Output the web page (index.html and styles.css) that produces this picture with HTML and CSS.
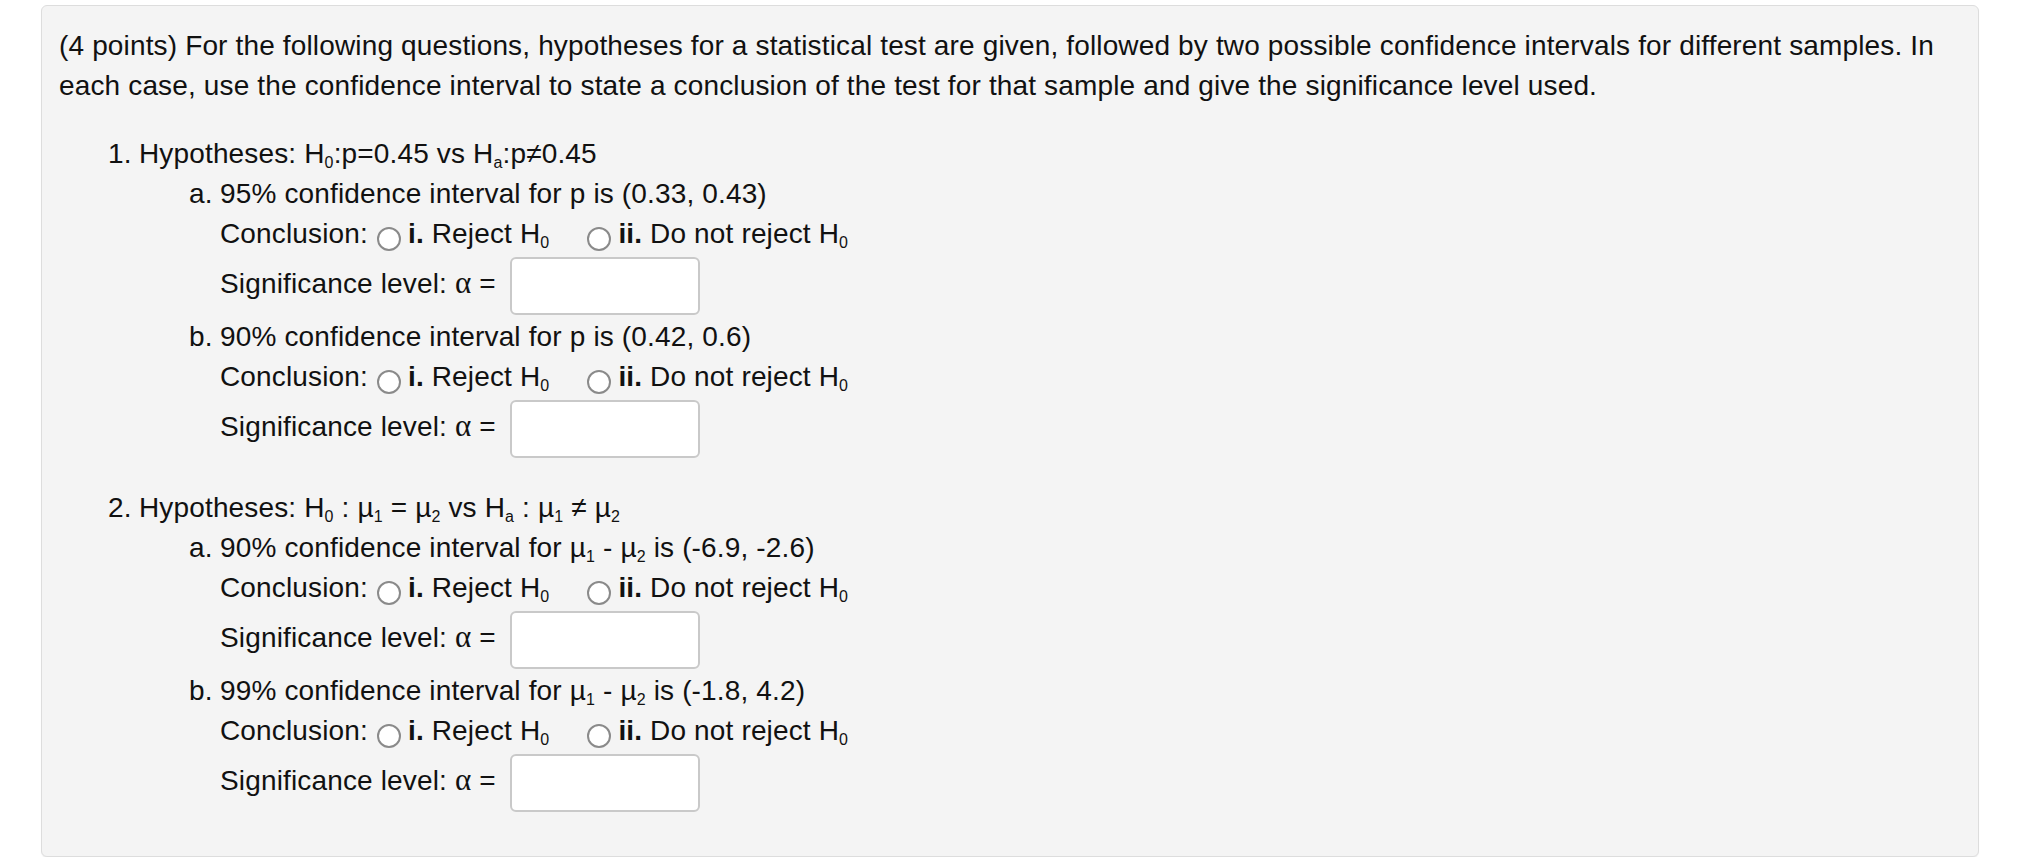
FILE: index.html
```html
<!DOCTYPE html>
<html lang="en">
<head>
<meta charset="utf-8">
<title>Confidence intervals and hypothesis tests</title>
<link rel="stylesheet" href="styles.css">
</head>
<body>
<div class="page">
  <div class="card">
    <p class="intro">(4 points) For the following questions, hypotheses for a statistical test are given, followed by two possible confidence intervals for different samples. In each case, use the confidence interval to state a conclusion of the test for that sample and give the significance level used.</p>
    <ol class="questions">
      <li class="question">
        <span class="num">1.</span>
        <div class="q-body">
          <div class="line">Hypotheses: H<sub>0</sub>:p=0.45 vs H<sub>a</sub>:p≠0.45</div>
          <ol class="parts">
            <li class="part">
              <span class="num">a.</span>
              <div class="part-body">
                <div class="line">95% confidence interval for p is (0.33, 0.43)</div>
                <div class="line">Conclusion:<label class="opt"><input type="radio" name="q1a" class="radio"><b>i.</b> Reject H<sub>0</sub></label><label class="opt opt-2"><input type="radio" name="q1a" class="radio"><b>ii.</b> Do not reject H<sub>0</sub></label></div>
                <div class="line sig">Significance level: <span class="alpha">α</span> =<input type="text" class="answer"></div>
              </div>
            </li>
            <li class="part">
              <span class="num">b.</span>
              <div class="part-body">
                <div class="line">90% confidence interval for p is (0.42, 0.6)</div>
                <div class="line">Conclusion:<label class="opt"><input type="radio" name="q1b" class="radio"><b>i.</b> Reject H<sub>0</sub></label><label class="opt opt-2"><input type="radio" name="q1b" class="radio"><b>ii.</b> Do not reject H<sub>0</sub></label></div>
                <div class="line sig">Significance level: <span class="alpha">α</span> =<input type="text" class="answer"></div>
              </div>
            </li>
          </ol>
        </div>
      </li>
      <li class="question">
        <span class="num">2.</span>
        <div class="q-body">
          <div class="line">Hypotheses: H<sub>0</sub> : µ<sub>1</sub> = µ<sub>2</sub> vs H<sub>a</sub> : µ<sub>1</sub> ≠ µ<sub>2</sub></div>
          <ol class="parts">
            <li class="part">
              <span class="num">a.</span>
              <div class="part-body">
                <div class="line">90% confidence interval for µ<sub>1</sub> - µ<sub>2</sub> is (-6.9, -2.6)</div>
                <div class="line">Conclusion:<label class="opt"><input type="radio" name="q2a" class="radio"><b>i.</b> Reject H<sub>0</sub></label><label class="opt opt-2"><input type="radio" name="q2a" class="radio"><b>ii.</b> Do not reject H<sub>0</sub></label></div>
                <div class="line sig">Significance level: <span class="alpha">α</span> =<input type="text" class="answer"></div>
              </div>
            </li>
            <li class="part">
              <span class="num">b.</span>
              <div class="part-body">
                <div class="line">99% confidence interval for µ<sub>1</sub> - µ<sub>2</sub> is (-1.8, 4.2)</div>
                <div class="line">Conclusion:<label class="opt"><input type="radio" name="q2b" class="radio"><b>i.</b> Reject H<sub>0</sub></label><label class="opt opt-2"><input type="radio" name="q2b" class="radio"><b>ii.</b> Do not reject H<sub>0</sub></label></div>
                <div class="line sig">Significance level: <span class="alpha">α</span> =<input type="text" class="answer"></div>
              </div>
            </li>
          </ol>
        </div>
      </li>
    </ol>
  </div>
</div>
</body>
</html>
```

FILE: styles.css
```css
* {
  box-sizing: border-box;
}

html,
body {
  margin: 0;
  background: #ffffff;
}

body {
  font-family: "Liberation Sans", Arial, Helvetica, sans-serif;
  font-size: 28px;
  line-height: 40px;
  letter-spacing: 0.15px;
  color: #111111;
}

.page {
  padding: 5px 65px 0 41px;
}

.card {
  background: #f4f4f4;
  border: 1px solid #dddddd;
  border-radius: 6px;
  padding: 20px 17px 42px 17px;
  box-shadow: 0 1px 1px rgba(0, 0, 0, 0.06);
}

.intro {
  margin: 0 0 28px;
}

.questions,
.parts {
  list-style: none;
  margin: 0;
  padding: 0;
}

.questions {
  padding-left: 49px;
}

.question {
  display: flex;
  margin-bottom: 28px;
}

.question:last-child {
  margin-bottom: 0;
}

.part {
  display: flex;
}

.num {
  flex: none;
  width: 31px;
}

.q-body,
.part-body {
  flex: 1;
  min-width: 0;
}

.parts {
  margin-left: 50px;
}

.line {
  white-space: nowrap;
}

sub {
  font-size: 16px;
  line-height: 0;
  vertical-align: -5px;
}

b {
  font-weight: 700;
}

.radio {
  appearance: none;
  -webkit-appearance: none;
  width: 24px;
  height: 24px;
  margin: 0 7px 0 9px;
  border: 2px solid #8a8a8a;
  border-radius: 50%;
  background: #ffffff;
  vertical-align: -8px;
}

.opt-2 {
  margin-left: 29px;
}

.alpha {
  font-family: "Liberation Serif", "Times New Roman", serif;
  font-size: 31px;
  line-height: 0;
}

.answer {
  width: 190px;
  height: 58px;
  margin: 2.5px 0 2.5px 14px;
  padding: 0 8px;
  vertical-align: middle;
  border: 2px solid #c9c9c9;
  border-radius: 6px;
  background: #ffffff;
  font: inherit;
}
```
